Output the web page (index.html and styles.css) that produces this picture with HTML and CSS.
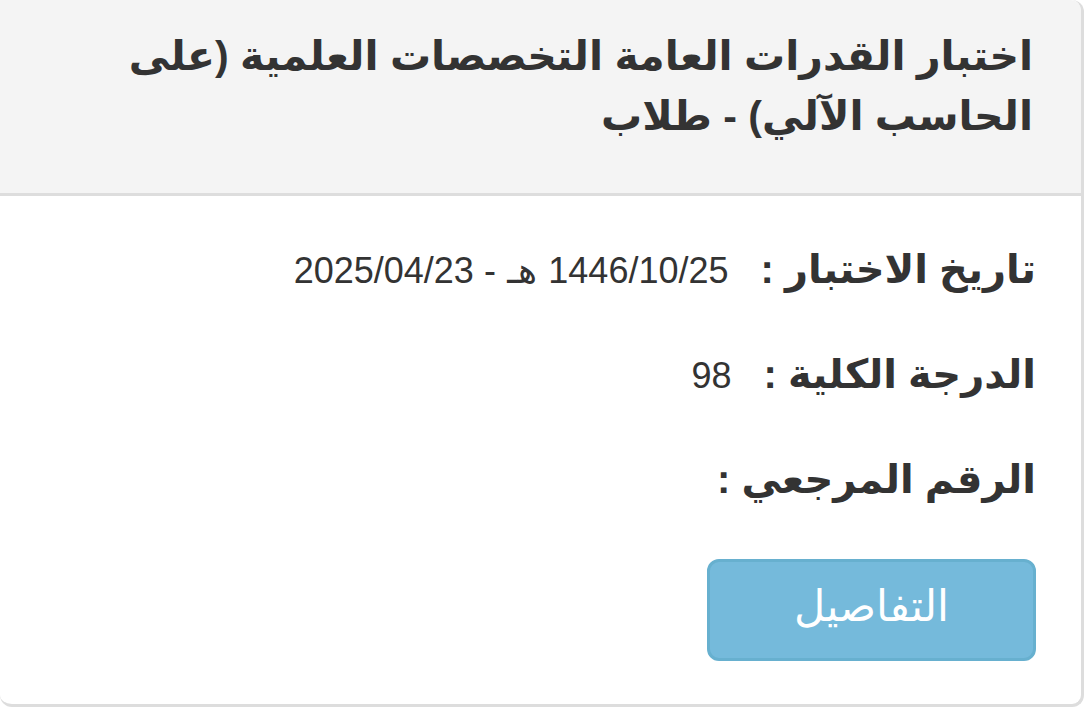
FILE: index.html
```html
<!DOCTYPE html>
<html lang="ar" dir="rtl">
<head>
    <meta charset="UTF-8" />
    <meta name="viewport" content="width=device-width, initial-scale=1" />
    <title>نتيجة الاختبار</title>
    <link rel="stylesheet" href="styles.css">
</head>
<body>
<div class="panel">
    <div class="panel-heading">
        <h3 class="panel-title">اختبار القدرات العامة التخصصات العلمية (على الحاسب الآلي) - طلاب</h3>
    </div>
    <div class="panel-body">
        <dl class="result-list">
            <div class="result-row">
                <dt>تاريخ الاختبار :</dt>
                <dd>1446/10/25<span class="hijri"> هـ </span>- <bdi>2025/04/23</bdi></dd>
            </div>
            <div class="result-row">
                <dt>الدرجة الكلية :</dt>
                <dd>98</dd>
            </div>
            <div class="result-row">
                <dt>الرقم المرجعي :</dt>
                <dd></dd>
            </div>
        </dl>
        <button type="button" class="btn-details">التفاصيل</button>
    </div>
</div>
</body>
</html>
```
FILE: styles.css
```css
body {
    margin: 0;
    font-family: "Liberation Sans", "DejaVu Sans", sans-serif;
    color: #333;
    background: #fff;
}

.panel {
    margin-right: 3px;
    border: 3px solid #ddd;
    border-top: none;
    border-left: none;
    border-radius: 0 12px 12px 12px;
    background: #fff;
}

.panel-heading {
    padding: 26px 48px 47px;
    border-bottom: 3px solid #ddd;
    border-top-right-radius: 10px;
    background: #f4f4f4;
}

.panel-title {
    margin: 0;
    font-size: 41px;
    line-height: 60px;
    font-weight: bold;
}

.panel-body {
    padding: 40px 45px 43px;
}

.result-list {
    display: grid;
    grid-auto-rows: 66px;
    gap: 39px;
    margin: 0 0 47px;
}

.result-row {
    display: flex;
    align-items: baseline;
    gap: 32px;
}

dt {
    font-size: 40px;
    line-height: 66px;
    font-weight: bold;
}

dd {
    margin: 0;
    font-size: 36px;
    line-height: 66px;
}

.hijri {
    font-family: "DejaVu Sans", sans-serif;
}

.btn-details {
    display: block;
    min-width: 329px;
    padding: 14px 36px 22px;
    border: 3px solid #67b0cf;
    border-radius: 12px;
    background: #75badb;
    color: #fff;
    font-family: "DejaVu Sans", sans-serif;
    font-size: 43px;
    line-height: 60px;
    cursor: pointer;
}
```
